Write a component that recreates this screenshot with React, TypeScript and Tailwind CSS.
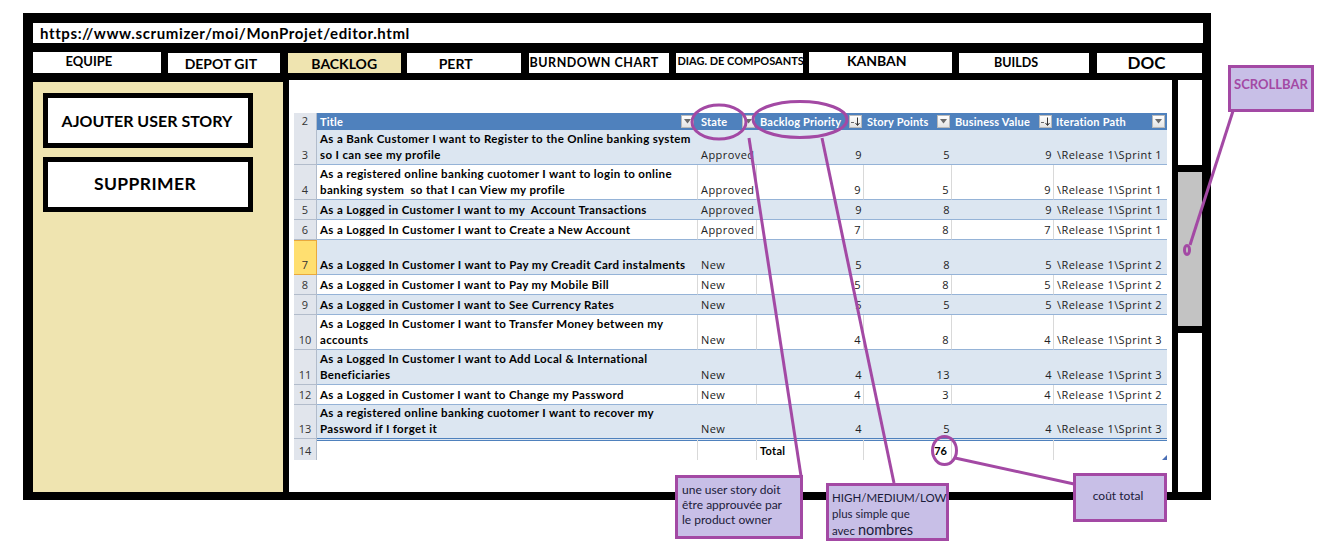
import type { ReactNode } from "react"

type Row = {
  n: number
  title: string[]
  state: string
  prio: number
  pts: number
  val: number
  iter: string
  tall?: boolean
  blue?: boolean
  selected?: boolean
}

const rows: Row[] = [
  { n: 3, title: ["As a Bank Customer I want to Register to the Online banking system", "so I can see my profile"], state: "Approved", prio: 9, pts: 5, val: 9, iter: "\\Release 1\\Sprint 1", tall: true, blue: true },
  { n: 4, title: ["As a registered online banking cuotomer I want to login to online", "banking system  so that I can View my profile"], state: "Approved", prio: 9, pts: 5, val: 9, iter: "\\Release 1\\Sprint 1", tall: true },
  { n: 5, title: ["As a Logged in Customer I want to my  Account Transactions"], state: "Approved", prio: 9, pts: 8, val: 9, iter: "\\Release 1\\Sprint 1", blue: true },
  { n: 6, title: ["As a Logged In Customer I want to Create a New Account"], state: "Approved", prio: 7, pts: 8, val: 7, iter: "\\Release 1\\Sprint 1" },
  { n: 7, title: ["As a Logged In Customer I want to Pay my Creadit Card instalments"], state: "New", prio: 5, pts: 8, val: 5, iter: "\\Release 1\\Sprint 2", tall: true, blue: true, selected: true },
  { n: 8, title: ["As a Logged in Customer I want to Pay my Mobile Bill"], state: "New", prio: 5, pts: 8, val: 5, iter: "\\Release 1\\Sprint 2" },
  { n: 9, title: ["As a Logged in Customer I want to See Currency Rates"], state: "New", prio: 5, pts: 5, val: 5, iter: "\\Release 1\\Sprint 2", blue: true },
  { n: 10, title: ["As a Logged In Customer I want to Transfer Money between my", "accounts"], state: "New", prio: 4, pts: 8, val: 4, iter: "\\Release 1\\Sprint 3", tall: true },
  { n: 11, title: ["As a Logged In Customer I want to Add Local & International", "Beneficiaries"], state: "New", prio: 4, pts: 13, val: 4, iter: "\\Release 1\\Sprint 3", tall: true, blue: true },
  { n: 12, title: ["As a Logged in Customer I want to Change my Password"], state: "New", prio: 4, pts: 3, val: 4, iter: "\\Release 1\\Sprint 2" },
  { n: 13, title: ["As a registered online banking cuotomer I want to recover my", "Password if I forget it"], state: "New", prio: 4, pts: 5, val: 4, iter: "\\Release 1\\Sprint 3", tall: true, blue: true },
]

const cols = "grid grid-cols-[23px_381px_59px_107px_88px_102px_113px]"

function Drop({ sort }: { sort?: boolean }) {
  return (
    <span className="flex h-[13px] w-[13px] shrink-0 items-center justify-center border border-[#b9b9b9] bg-gradient-to-b from-white to-[#e4e4e4]">
      {sort ? (
        <svg width="11" height="11" viewBox="0 0 11 11">
          <path d="M1 6.5h3" stroke="#666" strokeWidth="1" />
          <path d="M7.5 1.5v7.5M5.5 7l2 2.5 2-2.5" stroke="#333" strokeWidth="1" fill="none" />
        </svg>
      ) : (
        <svg width="9" height="5" viewBox="0 0 9 5">
          <path d="M1 0h7L4.5 4.5z" fill="#6b6b6b" />
        </svg>
      )}
    </span>
  )
}

function Head({ label, sort, pl }: { label: string; sort?: boolean; pl: string }) {
  return (
    <div className={`flex items-center justify-between pr-[2px] ${pl}`}>
      <span>{label}</span>
      <Drop sort={sort} />
    </div>
  )
}

function Cell({ children, blue, last, right, className = "" }: { children?: ReactNode; blue?: boolean; last?: boolean; right?: boolean; className?: string }) {
  return (
    <div
      className={`flex items-end pb-[1px] border-b border-[#95b3d7] ${blue ? "bg-[#dce6f1]" : "bg-white"} ${!blue && !last ? "border-r border-r-[#d9d9d9]" : ""} ${right ? "justify-end pr-[2px]" : "pl-[3px]"} ${className}`}
    >
      {children}
    </div>
  )
}

export default function App() {
  return (
    <div className="relative h-[550px] w-[1324px] overflow-hidden bg-white pl-[23px] pt-[13px] [font-family:Lato,sans-serif] text-black">
      {/* Cadre principal */}
      <div className="flex h-[487px] w-[1188px] flex-col bg-black pb-[8px] pl-[10px] pr-[9px] pt-[10px]">
        {/* URL */}
        <div className="h-[20px] w-[1170px] bg-white pl-[7px] text-[15px] font-bold leading-[21px] tracking-[0.6px]">
          https://www.scrumizer/moi/MonProjet/editor.html
        </div>

        {/* Onglets */}
        <div className="mt-[9px] flex h-[21px] text-[13px] font-bold">
          <div className="flex w-[128px] items-start justify-center bg-white pr-[16px] pt-[1px] leading-[17px]">EQUIPE</div>
          <div className="ml-[7px] mt-[1px] flex w-[112px] items-center justify-center bg-white pr-[6px] text-[14px]">DEPOT GIT</div>
          <div className="ml-[8px] mt-[1px] flex w-[113px] items-center justify-center bg-[#efe4b0] text-[14px]">BACKLOG</div>
          <div className="ml-[6px] mt-[1px] flex w-[114px] items-center justify-center bg-white pr-[16px] text-[14px]">PERT</div>
          <div className="ml-[8px] mt-[1px] flex w-[141px] items-center bg-white pl-[1px] text-[12.5px] tracking-[0.5px]">BURNDOWN CHART</div>
          <div className="ml-[7px] mt-[1px] flex w-[127px] items-start overflow-hidden whitespace-nowrap bg-white pl-[1px] text-[11px] leading-[16px]">DIAG. DE COMPOSANTS</div>
          <div className="ml-[6px] flex w-[143px] items-start justify-center bg-white pr-[8px] text-[14px] leading-[17px]">KANBAN</div>
          <div className="ml-[7px] mt-[1px] flex w-[130px] items-center justify-center bg-white pr-[16px] text-[12.5px]">BUILDS</div>
          <div className="ml-[8px] mt-[1px] flex w-[105px] items-center justify-center bg-white pr-[6px] text-[17px]">DOC</div>
        </div>

        {/* Zone principale */}
        <div className="mt-[7px] flex h-[412px]">
          {/* Barre latérale */}
          <div className="mt-[2px] flex w-[250px] flex-col gap-[9px] bg-[#efe4b0] pl-[10px] pt-[11px]">
            <div className="flex h-[55px] w-[210px] items-center justify-center border-[5px] border-black bg-white pr-[2px] text-[16px] font-bold">
              AJOUTER USER STORY
            </div>
            <div className="flex h-[55px] w-[210px] items-center justify-center border-[5px] border-black bg-white pr-[6px] text-[17.5px] font-bold tracking-[0.4px]">
              SUPPRIMER
            </div>
          </div>

          {/* Tableau */}
          <div className="ml-[6px] w-[883px] bg-white pl-[5px] pt-[33px]">
            <div className="w-[873px] text-[11px]">
              <div className={`${cols} h-[17px]`}>
                <div className="flex items-center justify-center border-b border-r border-[#b2bccb] bg-[#e1e5ec] [font-family:Open_Sans,sans-serif] text-[#333]">2</div>
                <div className="col-span-6 grid grid-cols-[381px_59px_107px_88px_102px_113px] bg-[#4f81bd] font-bold tracking-[0.2px] text-white">
                  <Head label="Title" pl="pl-[3px] pr-[4px]" />
                  <Head label="State" pl="pl-[3px]" />
                  <Head label="Backlog Priority" sort pl="pl-[3px]" />
                  <Head label="Story Points" pl="pl-[3px]" />
                  <Head label="Business Value" sort pl="pl-[3px]" />
                  <Head label="Iteration Path" pl="pl-[2px]" />
                </div>
              </div>

              {rows.map((r) => {
                const dbl = r.n === 13 ? "border-b-[3px] border-double border-b-[#4f81bd]" : ""
                const txt = "[font-family:Open_Sans,sans-serif] tracking-[0.45px] text-[#222]"
                return (
                  <div key={r.n} className={`${cols} ${r.tall ? "h-[35px]" : "h-[20px]"}`}>
                    <div
                      className={`flex items-end justify-center pb-[1px] [font-family:Open_Sans,sans-serif] text-[#333] ${
                        r.selected
                          ? "border-b border-r border-t border-[#e9a93d] bg-[#ffdf70]"
                          : "border-b border-r border-[#b2bccb] bg-[#e1e5ec]"
                      } ${r.n === 13 ? "border-b-[3px] border-double" : ""}`}
                    >
                      {r.n}
                    </div>
                    <Cell blue={r.blue} className={`flex-col items-start justify-end text-[11.5px] font-bold leading-[16px] tracking-[0.35px] ${dbl}`}>
                      {r.title.map((t) => (
                        <span key={t} className="whitespace-pre">{t}</span>
                      ))}
                    </Cell>
                    <Cell blue={r.blue} className={`${txt} ${dbl}`}>{r.state}</Cell>
                    <Cell blue={r.blue} right className={`${txt} ${dbl}`}>{r.prio}</Cell>
                    <Cell blue={r.blue} right className={`${txt} ${dbl}`}>{r.pts}</Cell>
                    <Cell blue={r.blue} right className={`${txt} ${dbl}`}>{r.val}</Cell>
                    <Cell blue={r.blue} last className={`whitespace-nowrap ${txt} ${dbl}`}>{r.iter}</Cell>
                  </div>
                )
              })}

              {/* Ligne total */}
              <div className={`${cols} h-[20px]`}>
                <div className="flex items-end justify-center border-r border-[#b2bccb] bg-[#e1e5ec] pb-[1px] [font-family:Open_Sans,sans-serif] text-[#333]">14</div>
                <div className="border-r border-[#d9d9d9]" />
                <div className="border-r border-[#d9d9d9]" />
                <div className="flex items-end border-r border-[#d9d9d9] pb-[1px] pl-[3px] font-bold tracking-[0.3px]">Total</div>
                <div className="flex items-end justify-end border-r border-[#d9d9d9] pb-[1px] pr-[4px] font-bold">76</div>
                <div className="border-r border-[#d9d9d9]" />
                <div className="relative">
                  <svg className="absolute bottom-0 right-0" width="5" height="5" viewBox="0 0 5 5">
                    <path d="M5 0v5H0z" fill="#4a6fb5" />
                  </svg>
                </div>
              </div>
            </div>
          </div>

          {/* Scrollbar */}
          <div className="ml-[6px] flex w-[24px] flex-col bg-white">
            <div className="h-[85px]" />
            <div className="h-[7px] bg-black" />
            <div className="h-[154px] bg-[#c3c3c3]" />
            <div className="h-[7px] bg-black" />
          </div>
        </div>
      </div>

      {/* Annotations */}
      <svg className="pointer-events-none absolute left-0 top-0" width="1324" height="550" viewBox="0 0 1324 550">
        <g fill="none" stroke="#a349a4" strokeWidth="3">
          <ellipse cx="719" cy="122" rx="27" ry="17" />
          <ellipse cx="800" cy="119.5" rx="47" ry="18" />
          <ellipse cx="944.5" cy="450.5" rx="12" ry="14" />
          <ellipse cx="1187" cy="250" rx="2.5" ry="4.5" />
          <path d="M749 138 L801 476" />
          <path d="M822 138 L894 483" />
          <path d="M955 458 L1074 484" />
          <path d="M1233 111 L1190 245" />
        </g>
      </svg>

      <div className="absolute left-[1228px] top-[65px] flex h-[47px] w-[86px] justify-center border-[3px] border-[#a349a4] bg-[#c8bfe7] pt-[9px] text-[13px] font-bold leading-[14px] text-[#a349a4]">
        SCROLLBAR
      </div>

      <div className="absolute left-[675px] top-[475px] h-[64px] w-[128px] border-[3px] border-[#a349a4] bg-[#c8bfe7] pl-[4px] pt-[4px] text-[12px] leading-[15px] text-[#1b1b3a]">
        une user story doit
        <br />
        être approuvée par
        <br />
        le product owner
      </div>

      <div className="absolute left-[826px] top-[483px] h-[58px] w-[123px] border-[3px] border-[#a349a4] bg-[#c8bfe7] pl-[3px] pt-[4px] text-[11.5px] leading-[16px] text-[#1b1b3a]">
        HIGH/MEDIUM/LOW
        <br />
        plus simple que
        <br />
        avec <span className="text-[14.5px]">nombres</span>
      </div>

      <div className="absolute left-[1073px] top-[473px] flex h-[49px] w-[94px] justify-center border-[3px] border-[#a349a4] bg-[#c8bfe7] pr-[4px] pt-[12px] text-[12px] leading-[15px] text-[#1b1b3a]">
        coût total
      </div>
    </div>
  )
}
